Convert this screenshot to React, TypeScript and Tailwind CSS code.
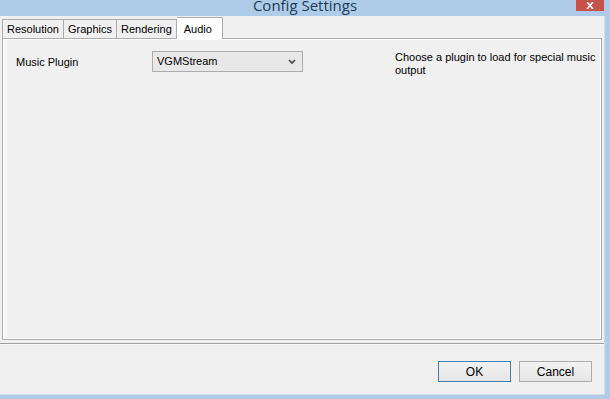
import React from "react";

export default function App() {
  const font = { fontFamily: '"Liberation Sans", Arial, sans-serif' };
  return (
    <div className="w-[610px] h-[399px] bg-[#aecbe8] flex flex-col overflow-hidden" style={font}>
      {/* Title bar */}
      <div className="relative h-[16px] shrink-0 flex justify-center">
        <div className="absolute left-0 right-0 top-[-6px] text-center text-[15px] text-[#1d3b57]" style={{ fontFamily: '"Open Sans", sans-serif' }}>
          Config Settings
        </div>
        <div className="absolute right-[6px] top-0 w-[28px] h-[11px] bg-[#c7504b] flex items-center justify-center">
          <svg width="8" height="7" viewBox="0 0 8 7"><path d="M1 0 L7 7 M7 0 L1 7" stroke="#fff" strokeWidth="1.6" /></svg>
        </div>
      </div>
      {/* Client */}
      <div className="flex-1 mr-[5px] mb-[4px] bg-[#f0f0f0] border-r border-b border-[#d4dce6] flex flex-col">
        {/* Tabs */}
        <div className="flex items-end h-[22px] pl-[2px] relative z-10">
          <div className="h-[19px] px-[4px] border border-[#acacac] border-r-0 border-b-0 bg-[#f0f0f0] text-[11px] text-black flex items-center">Resolution</div>
          <div className="h-[19px] px-[4px] border border-[#acacac] border-r-0 border-b-0 bg-[#f0f0f0] text-[11px] text-black flex items-center">Graphics</div>
          <div className="h-[19px] px-[4px] border border-[#acacac] border-b-0 bg-[#f0f0f0] text-[11px] text-black flex items-center">Rendering</div>
          <div className="h-[22px] pl-[7px] pr-[10px] border border-[#acacac] border-l-0 border-b-0 bg-white text-[11px] text-black flex items-start pt-[3px] mb-[-1px]">Audio</div>
        </div>
        {/* Panel */}
        <div className="mx-[2px] h-[302px] border border-[#acacac] bg-white p-[1px]">
          <div className="h-full bg-[#f0f0f0] border-l-[3px] border-[#f7f7f7] relative">
            <div className="flex items-start pt-[11px]">
              <div className="w-[145px] shrink-0 pl-[9px] pt-[3px] text-[11px] text-black">Music Plugin</div>
              <div className="w-[151px] shrink-0 h-[21px] border border-[#acacac] bg-[#e8e8e8] flex items-center justify-between pl-[4px] pr-[6px] text-[11px] text-black">
                <span>VGMStream</span>
                <svg width="8" height="6" viewBox="0 0 8 6"><path d="M1 1 L4 4 L7 1" stroke="#444" strokeWidth="1.6" fill="none" /></svg>
              </div>
              <div className="ml-[92px] shrink-0 w-[204px] text-[11px] leading-[13px] text-black">
                Choose a plugin to load for special music output
              </div>
            </div>
          </div>
        </div>
        {/* Separator */}
        <div className="mt-[3px] h-[2px] bg-[#a0a0a0] border-b border-[#f7f7f7]"></div>
        {/* Buttons */}
        <div className="flex justify-end gap-[8px] pr-[12px] pt-[16px]">
          <div className="w-[73px] h-[21px] border border-[#3c7fb1] bg-gradient-to-b from-[#f2f2f2] to-[#e6e6e6] text-[12px] text-black flex items-center justify-center">OK</div>
          <div className="w-[73px] h-[21px] border border-[#acacac] bg-gradient-to-b from-[#f2f2f2] to-[#e6e6e6] text-[12px] text-black flex items-center justify-center">Cancel</div>
        </div>
      </div>
    </div>
  );
}
